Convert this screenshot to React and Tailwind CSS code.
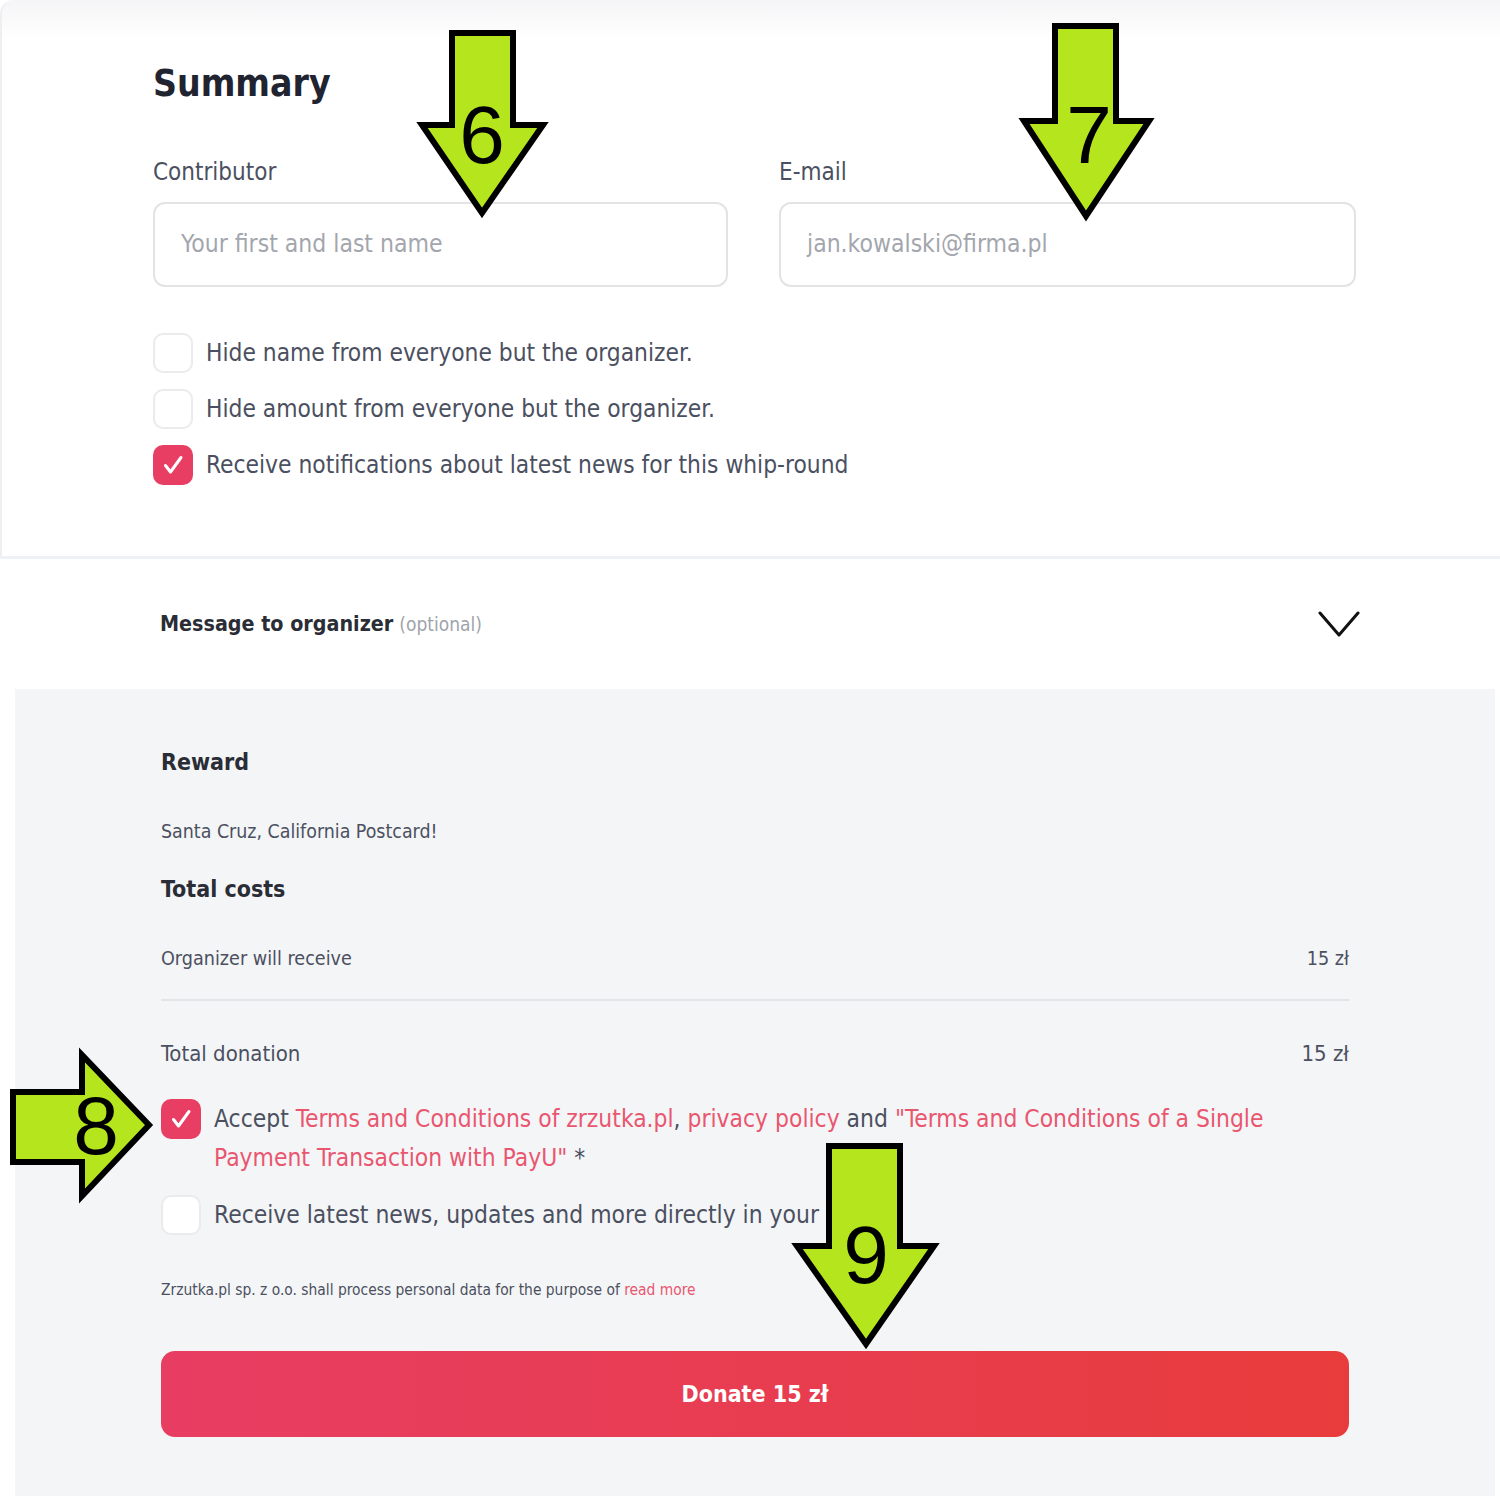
import React from 'react';

const FONT = { fontFamily: '"Liberation Sans Narrow", "DejaVu Sans Condensed", "Roboto", sans-serif' };

function Box({ checked }) {
  if (checked) {
    return (
      <div className="w-[40px] h-[40px] shrink-0 rounded-[10px] bg-[#e83e63] flex items-center justify-center">
        <svg width="24" height="24" viewBox="0 0 24 24" fill="none" stroke="#fff" strokeWidth="3" strokeLinecap="round" strokeLinejoin="round">
          <path d="M4.5 12.5l5 6.5L20 4.5" />
        </svg>
      </div>
    );
  }
  return <div className="w-[40px] h-[40px] shrink-0 rounded-[10px] bg-white border-2 border-[#ebebee]" />;
}

function Arrows() {
  const st = { fill: '#b5e61d', stroke: '#000', strokeWidth: 6, strokeLinejoin: 'miter' };
  const tx = { fontFamily: '"Liberation Sans", sans-serif', fontSize: 82, fill: '#000' };
  return (
    <svg className="absolute inset-0 pointer-events-none" width="1500" height="1500" viewBox="0 0 1500 1500">
      <polygon points="452,33 513,33 513,125 543,125 482,213 422,125 452,125" style={st} />
      <text x="482" y="163" textAnchor="middle" style={tx}>6</text>
      <polygon points="1055,26 1116,26 1116,121 1149,121 1086,216 1024,121 1055,121" style={st} />
      <text x="1089" y="163" textAnchor="middle" style={tx}>7</text>
      <polygon points="13,1092 82,1092 82,1055 149,1125 82,1196 82,1162 13,1162" style={st} />
      <text x="96" y="1154" textAnchor="middle" style={tx}>8</text>
      <polygon points="829,1146 900,1146 900,1246 934,1246 866,1344 797,1246 829,1246" style={st} />
      <text x="866" y="1283" textAnchor="middle" style={tx}>9</text>
    </svg>
  );
}

export default function App() {
  return (
    <div className="relative w-[1500px] h-[1500px] bg-white overflow-hidden text-[#4b5060]" style={FONT}>
      <div className="relative border-l-2 border-[#efeff2] rounded-tl-[14px] bg-gradient-to-b from-[#f5f5f7] to-white to-[40px] pl-[151px] pr-[144px] pt-[60px] pb-[71px]">
        <h1 className="text-[37px] leading-[48px] font-semibold text-[#1f2430]">Summary</h1>
        <div className="grid grid-cols-[575px_577px] gap-x-[51px] mt-[49px]">
          <div>
            <div className="text-[24px] leading-[30px] mb-[15px]">Contributor</div>
            <div className="h-[85px] rounded-[12px] border-2 border-[#e3e3e6] bg-white flex items-center px-[26px] text-[24.5px] text-[#a3a6ad]">Your first and last name</div>
          </div>
          <div>
            <div className="text-[24px] leading-[30px] mb-[15px]">E-mail</div>
            <div className="h-[85px] rounded-[12px] border-2 border-[#e3e3e6] bg-white flex items-center px-[26px] text-[24.5px] text-[#a3a6ad]">jan.kowalski@firma.pl</div>
          </div>
        </div>
        <div className="mt-[46px] flex flex-col gap-[16px]">
          {[
            ['Hide name from everyone but the organizer.', false],
            ['Hide amount from everyone but the organizer.', false],
            ['Receive notifications about latest news for this whip-round', true],
          ].map(([t, c]) => (
            <div key={t} className="flex items-center gap-[13px] text-[24.3px] leading-[40px]">
              <Box checked={c} />
              <span>{t}</span>
            </div>
          ))}
        </div>
      </div>
      <div className="h-[3px] bg-[#eef1f6]" />
      <div className="h-[130px] flex items-center justify-between pl-[160px] pr-[140px]">
        <div className="text-[21.3px]">
          <span className="font-semibold text-[#2a2d35]">Message to organizer</span>{' '}
          <span className="text-[19px] text-[#a0a3aa]">(optional)</span>
        </div>
        <svg width="42" height="28" viewBox="0 0 42 28" fill="none" stroke="#111" strokeWidth="3" strokeLinecap="round" strokeLinejoin="round">
          <path d="M2 3l19 22L40 3" />
        </svg>
      </div>
      <div className="ml-[15px] mr-[5px] bg-[#f4f5f7] pl-[146px] pr-[146px] pt-[57px] pb-[59px]">
        <div className="text-[23px] leading-[32px] font-semibold text-[#2a2d35]">Reward</div>
        <div className="text-[19.4px] leading-[26px] mt-[41px]">Santa Cruz, California Postcard!</div>
        <div className="text-[23px] leading-[32px] font-semibold text-[#2a2d35] mt-[28px]">Total costs</div>
        <div className="flex justify-between text-[19.6px] leading-[26px] mt-[41px]">
          <span>Organizer will receive</span>
          <span>15 zł</span>
        </div>
        <div className="h-[2px] bg-[#e2e4e8] mt-[27px]" />
        <div className="flex justify-between text-[22px] leading-[28px] mt-[39px]">
          <span>Total donation</span>
          <span>15 zł</span>
        </div>
        <div className="flex items-start gap-[13px] mt-[31px] text-[24.4px] leading-[39px]">
          <Box checked />
          <p>
            Accept <span className="text-[#e9566f]">Terms and Conditions of zrzutka.pl</span>,{' '}
            <span className="text-[#e9566f]">privacy policy</span> and{' '}
            <span className="text-[#e9566f]">"Terms and Conditions of a Single</span>
            <br />
            <span className="text-[#e9566f]">Payment Transaction with PayU"</span> *
          </p>
        </div>
        <div className="flex items-center gap-[13px] mt-[18px] text-[24.4px] leading-[40px]">
          <Box />
          <span>Receive latest news, updates and more directly in your inbox</span>
        </div>
        <div className="text-[15.4px] leading-[20px] mt-[45px]">
          Zrzutka.pl sp. z o.o. shall process personal data for the purpose of <span className="text-[#e9566f]">read more</span>
        </div>
        <button className="mt-[51px] w-full h-[86px] rounded-[14px] bg-gradient-to-r from-[#e83d62] to-[#e83c3c] text-white text-[23px] font-bold">
          Donate 15 zł
        </button>
      </div>
      <Arrows />
    </div>
  );
}
